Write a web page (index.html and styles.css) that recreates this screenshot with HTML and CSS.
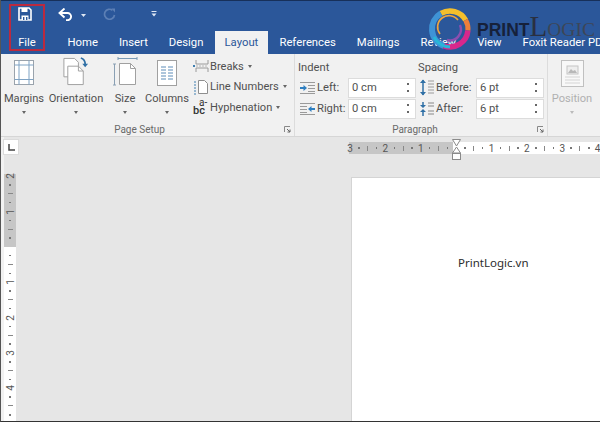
FILE: index.html
```html
<!DOCTYPE html>
<html lang="en">
<head>
<meta charset="utf-8">
<title>Word Layout</title>
<link rel="stylesheet" href="styles.css">
</head>
<body>
<div class="window">
  <header class="top">
    <div class="qat">
      <svg class="ic-save" width="14" height="14" viewBox="0 0 14 14"><path d="M1 1h10l2 2v10H1z" fill="none" stroke="#fff" stroke-width="1.6"/><path d="M3.5 1v4h6V1" fill="#fff"/><rect x="3.5" y="8.5" width="7" height="4.5" fill="#fff"/><rect x="5" y="10" width="1.4" height="3" fill="#2b579a"/><rect x="8" y="10" width="1.4" height="3" fill="#2b579a"/></svg>
      <svg class="ic-undo" width="15" height="13" viewBox="0 0 15 13"><path d="M2 5h7.5a3.6 3.6 0 0 1 0 7.2H8" fill="none" stroke="#fff" stroke-width="1.9"/><path d="M6.5 0.5L1.5 5l5 4.5" fill="none" stroke="#fff" stroke-width="1.9"/></svg>
      <svg class="ic-drop" width="5" height="3" viewBox="0 0 5 3"><path d="M0 0h5L2.5 3z" fill="#dfe7f3"/></svg>
      <svg class="ic-redo" width="13" height="13" viewBox="0 0 13 13"><path d="M9.5 2.2A5 5 0 1 0 11.5 7" fill="none" stroke="#5c7fb5" stroke-width="1.7"/><path d="M8.5 0.5h3.5v4z" fill="#5c7fb5"/></svg>
      <svg class="ic-custom" width="6" height="6" viewBox="0 0 6 6"><path d="M0.5 0.5h5" stroke="#dfe7f3"/><path d="M0.5 2.5h5L3 5.5z" fill="#dfe7f3"/></svg>
    </div>
    <nav class="tabs">
      <span class="tab tab-file">File</span>
      <span class="tab">Home</span>
      <span class="tab">Insert</span>
      <span class="tab">Design</span>
      <span class="tab tab-on">Layout</span>
      <span class="tab">References</span>
      <span class="tab">Mailings</span>
      <span class="tab">Review</span>
      <span class="tab">View</span>
      <span class="tab tab-last">Foxit Reader PDF</span>
    </nav>
    <div class="file-mark"></div>
    <div class="logo">
      <svg width="46" height="46" viewBox="0 0 46 46">
        <path d="M14 6.4A18 18 0 0 1 38.6 13" fill="none" stroke="#f4bf2c" stroke-width="5.5"/>
        <path d="M38.6 13A18 18 0 0 1 40.9 23.6" fill="none" stroke="#ee7f3a" stroke-width="5"/>
        <path d="M40.9 23.6A18 18 0 0 1 16.8 38.9" fill="none" stroke="#d8278c" stroke-width="5.5"/>
        <path d="M16.8 38.9A18 18 0 0 1 14 6.4" fill="none" stroke="#3f93d6" stroke-width="6"/>
        <path d="M13 27A11 11 0 0 1 31 13" fill="none" stroke="#f0a63c" stroke-width="1.6"/>
        <path d="M33 18A11 11 0 0 1 20 33" fill="none" stroke="#8b4fb0" stroke-width="2.4"/>
        <path d="M7 30A18 18 0 0 0 23 40" fill="none" stroke="#27b6d8" stroke-width="3"/>
      </svg>
      <span class="logo-print">PRINT</span><span class="logo-l">L</span><span class="logo-ogic">OGIC</span>
    </div>
  </header>

  <section class="ribbon">
    <div class="group group-setup">
      <div class="group-body">
        <div class="big b-margins">
          <svg width="22" height="27" viewBox="0 0 22 27"><rect x="1.5" y="1.5" width="19" height="24" fill="#fff" stroke="#9aa3ac"/><path d="M6 1.5v24M16 1.5v24" stroke="#7fa3c4"/><path d="M1.5 6h19M1.5 20.500h19" stroke="#7fa3c4"/></svg>
          <span class="big-label">Margins</span><i class="caret"></i>
        </div>
        <div class="big b-orient">
          <svg width="28" height="30" viewBox="0 0 28 30"><path d="M1.500 1.500h11l4 4v15h-15z" fill="#fff" stroke="#a0a0a0"/><path d="M5.500 9.500h11l5 5v14h-16z" fill="#fff" stroke="#a0a0a0"/><path d="M16.500 9.500v5h5" fill="none" stroke="#a0a0a0"/><path d="M19 1c3 1 4.500 3 4.500 6.500" fill="none" stroke="#2f6fa5" stroke-width="1.800"/><path d="M20.500 7h6l-3 3.500z" fill="#2f6fa5"/></svg>
          <span class="big-label">Orientation</span><i class="caret"></i>
        </div>
        <div class="big b-size">
          <svg width="25" height="29" viewBox="0 0 25 29"><path d="M5 1.500h19M5 0v3M24 0v3" stroke="#7a9ab5"/><path d="M1.500 7v21M0 7h3M0 28h3" stroke="#8aa0b4"/><path d="M6.500 6.500h11l5 5v16h-16z" fill="#fff" stroke="#a0a0a0"/><path d="M17.500 6.500v5h5" fill="none" stroke="#a0a0a0"/></svg>
          <span class="big-label">Size</span><i class="caret"></i>
        </div>
        <div class="big b-cols">
          <svg width="20" height="26" viewBox="0 0 20 26"><rect x="0.500" y="0.500" width="19" height="25" fill="#fff" stroke="#a0a0a0"/><path d="M4 7h5M11 7h5M4 10h5M11 10h5M4 13h5M11 13h5M4 16h5M11 16h5M4 19h5M11 19h5" stroke="#5d8cb8"/></svg>
          <span class="big-label">Columns</span><i class="caret"></i>
        </div>
        <div class="smalls">
          <div class="small">
            <svg width="16" height="14" viewBox="0 0 16 14"><path d="M3 1v4h12V1M3 13V9h12v4" fill="none" stroke="#9a9a9a"/><path d="M0 7h2" stroke="#3f7fb0" stroke-width="2"/><path d="M3 7h12" stroke="#b8b8b8" stroke-dasharray="2 1"/></svg>
            <span>Breaks</span><i class="caret"></i>
          </div>
          <div class="small">
            <svg width="16" height="16" viewBox="0 0 16 16"><path d="M5.500 1.500h6l3 3v10h-9z" fill="#fff" stroke="#8e8e8e"/><path d="M1 3h2M1 6h2M1 9h2M1 12h2M1 15h2" stroke="#3f7fb0"/></svg>
            <span>Line Numbers</span><i class="caret"></i>
          </div>
          <div class="small">
            <span class="hy"><b>bc</b><sup>a-</sup></span>
            <span>Hyphenation</span><i class="caret"></i>
          </div>
        </div>
      </div>
      <div class="group-foot foot-setup">Page Setup
        <svg class="launcher" width="7" height="7" viewBox="0 0 7 7"><path d="M0.500 6V0.500H6" fill="none" stroke="#888"/><path d="M3 3l3 3M6 3.500V6H3.500" fill="none" stroke="#666"/></svg>
      </div>
    </div>

    <div class="group group-para">
      <div class="group-body para-body">
        <div class="para-col col-indent">
          <div class="para-head">Indent</div>
          <div class="para-row">
            <svg class="ri" width="15" height="12" viewBox="0 0 15 12"><path d="M0 0.500h15M8 3.500h7M8 6.500h7M8 9.500h7M0 11.500h15" stroke="#9a9a9a"/><path d="M0 6h4" stroke="#2f7fc0" stroke-width="2"/><path d="M3.500 3l3.500 3-3.500 3z" fill="#2f7fc0"/></svg>
            <span class="lab">Left:</span>
            <div class="spin"><span>0 cm</span><i class="arrows"></i></div>
          </div>
          <div class="para-row">
            <svg class="ri" width="15" height="12" viewBox="0 0 15 12"><path d="M0 0.500h15M0 3.500h7M0 6.500h7M0 9.500h7M0 11.500h15" stroke="#9a9a9a"/><path d="M11 6h4" stroke="#2f7fc0" stroke-width="2"/><path d="M11.500 3L8 6l3.500 3z" fill="#2f7fc0"/></svg>
            <span class="lab">Right:</span>
            <div class="spin"><span>0 cm</span><i class="arrows"></i></div>
          </div>
        </div>
        <div class="para-col col-spacing">
          <div class="para-head">Spacing</div>
          <div class="para-row">
            <svg class="ri ri-w" width="14" height="17" viewBox="0 0 14 17"><path d="M3 1v15" stroke="#2f6fa5" stroke-width="1.500"/><path d="M0 4l3-3.500L6 4zM0 13l3 3.500L6 13z" fill="#2f6fa5"/><path d="M8 2h6M8 5h6M8 8h6M8 11h6M8 14h6" stroke="#9a9a9a"/></svg>
            <span class="lab lab-w">Before:</span>
            <div class="spin"><span>6 pt</span><i class="arrows"></i></div>
          </div>
          <div class="para-row">
            <svg class="ri ri-w" width="14" height="15" viewBox="0 0 14 15"><path d="M3 1v4M3 10v5" stroke="#2f6fa5" stroke-width="1.500"/><path d="M0 4l3 3 3-3zM0 11l3-3 3 3z" fill="#2f6fa5"/><path d="M8 2h6M8 5h6M8 10h6M8 13h6" stroke="#aaa" stroke-width="1.500"/></svg>
            <span class="lab lab-w">After:</span>
            <div class="spin"><span>6 pt</span><i class="arrows"></i></div>
          </div>
        </div>
      </div>
      <div class="group-foot foot-para">Paragraph
        <svg class="launcher" width="7" height="7" viewBox="0 0 7 7"><path d="M0.500 6V0.500H6" fill="none" stroke="#888"/><path d="M3 3l3 3M6 3.500V6H3.500" fill="none" stroke="#666"/></svg>
      </div>
    </div>

    <div class="group group-pos">
      <div class="big big-off">
        <svg width="23" height="27" viewBox="0 0 23 27"><rect x="0.500" y="0.500" width="22" height="26" fill="#f8f8f8" stroke="#c0c0c0"/><rect x="6" y="6" width="11" height="8" fill="#eee" stroke="#c4c4c4"/><path d="M7 13l3-4 2 2 2-1 2 3z" fill="#b8b8b8"/><path d="M4 17h15M4 20h15M4 23h15" stroke="#d4d4d4"/></svg>
        <span class="big-label">Position</span><i class="caret"></i>
      </div>
    </div>
  </section>

  <section class="workspace">
    <aside class="vside">
      <div class="corner"><svg width="7" height="7" viewBox="0 0 7 7"><path d="M1 0v6h6" fill="none" stroke="#444" stroke-width="1.500"/></svg></div>
      <div class="vruler">
        <i class="c n first"><b>2</b></i><i class="c d"></i><i class="c l"></i><i class="c d"></i>
        <i class="c n"><b>1</b></i><i class="c d"></i><i class="c l"></i><i class="c d"></i>
        <i class="c n"></i><i class="c d"></i><i class="c l"></i><i class="c d"></i>
        <i class="c n"><b>1</b></i><i class="c d"></i><i class="c l"></i><i class="c d"></i>
        <i class="c n"><b>2</b></i><i class="c d"></i><i class="c l"></i><i class="c d"></i>
        <i class="c n"><b>3</b></i><i class="c d"></i><i class="c l"></i><i class="c d"></i>
        <i class="c n"><b>4</b></i><i class="c d"></i><i class="c l"></i><i class="c d"></i>
      </div>
    </aside>
    <main class="docarea">
      <div class="hruler">
        <i class="c n first"><b>3</b></i><i class="c d"></i><i class="c l"></i><i class="c d"></i>
        <i class="c n"><b>2</b></i><i class="c d"></i><i class="c l"></i><i class="c d"></i>
        <i class="c n"><b>1</b></i><i class="c d"></i><i class="c l"></i><i class="c d"></i>
        <i class="c n"></i><i class="c d"></i><i class="c l"></i><i class="c d"></i>
        <i class="c n"><b>1</b></i><i class="c d"></i><i class="c l"></i><i class="c d"></i>
        <i class="c n"><b>2</b></i><i class="c d"></i><i class="c l"></i><i class="c d"></i>
        <i class="c n"><b>3</b></i><i class="c d"></i><i class="c l"></i><i class="c d"></i>
        <i class="c n"><b>4</b></i>
      </div>
      <svg class="indent-mark" width="10" height="21" viewBox="0 0 10 21"><path d="M0.500 0.500h8L4.500 7z" fill="#fff" stroke="#8a8a8a"/><path d="M4.500 8l4 6h-8z" fill="#fff" stroke="#8a8a8a"/><rect x="0.500" y="14.500" width="8" height="6" fill="#fff" stroke="#8a8a8a"/></svg>
      <article class="page"><p class="page-text">PrintLogic.vn</p></article>
    </main>
  </section>
</div>
</body>
</html>
```
FILE: styles.css
```css
* { box-sizing: border-box; }
html, body { margin: 0; padding: 0; }
body { width: 600px; height: 422px; overflow: hidden; font-family: Roboto, "Noto Sans", sans-serif; color: #505050; background: #e6e6e6; }
.window { position: relative; width: 600px; height: 422px; display: flex; flex-direction: column; border-left: 1px solid #555; border-bottom: 1px solid #333; overflow: hidden; }

.top { position: relative; height: 54px; flex: none; background: #2b579a; border-top: 1px solid #17305a; margin-left: -1px; }
.qat { height: 30px; position: relative; display: flex; align-items: flex-start; }
.ic-save { margin: 6px 0 0 18px; }
.ic-undo { margin: 7px 0 0 26px; }
.ic-drop { margin: 13px 0 0 8px; }
.ic-redo { margin: 7px 0 0 17px; }
.ic-custom { margin: 10px 0 0 35px; }

.tabs { display: flex; height: 23px; white-space: nowrap; }
.tab { padding: 3px 10.500px 0; font-size: 11.300px; line-height: 18px; color: #fff; flex: none; }
.tab-file { width: 57px; padding: 3px 3px 0 0; text-align: center; }
.tab-on { width: 53px; padding: 3px 0 0; text-align: center; background: #f1f1f1; color: #2b579a; margin: 0 1px; }
.tab-last { padding-right: 0; }
.file-mark { position: absolute; left: 9px; top: 3px; width: 36px; height: 47px; border: 2px solid #bb2a3f; }

.logo { position: absolute; left: 427px; top: 6px; width: 173px; height: 46px; display: flex; align-items: baseline; }
.logo svg { position: absolute; left: 0; top: 0; }
.logo-print { margin: 13px 0 0 50px; font: bold 17.500px/20px "Liberation Sans", sans-serif; color: #16213a; }
.logo-l { font: 29px/20px "Liberation Serif", serif; color: #2a3040; }
.logo-ogic { font: 19.500px/20px "Liberation Serif", serif; color: #3d4657; }

.ribbon { height: 83px; flex: none; display: flex; background: #f1f1f1; border-bottom: 1px solid #d6d6d6; }
.group { display: flex; flex-direction: column; border-right: 1px solid #dcdcdc; }
.group-setup { width: 294px; }
.group-para { width: 253px; }
.group-pos { flex: 1; border-right: 0; padding: 6px 0 0 4px; }
.group-body { flex: 1; display: flex; }
.group-foot { position: relative; height: 15px; padding-top: 2px; font-size: 10px; line-height: 13px; text-align: center; color: #6a6a6a; }
.foot-setup { padding-right: 16px; }
.foot-para { padding-right: 12px; }
.launcher { position: absolute; right: 3px; top: 5px; }

.big { display: flex; flex-direction: column; align-items: center; font-size: 11.100px; }
.big svg { height: 27px; }
.big-label { margin-top: 5px; line-height: 16px; white-space: nowrap; }
.caret { display: block; width: 0; height: 0; border: 2.500px solid transparent; border-top: 3px solid #666; border-bottom: 0; }
.big .caret { margin-top: 4px; }
.b-margins { width: 40px; margin: 5px 0 0 3px; }
.b-orient { width: 58px; margin: 3px 0 0 3px; }
.b-orient svg { height: 29px; }
.b-size { width: 24px; margin: 3px 0 0 8px; }
.b-size svg { height: 29px; }
.b-cols { width: 44px; margin: 6px 0 0 8px; }
.b-cols svg { height: 26px; }
.smalls { margin: 2px 0 0 4px; display: flex; flex-direction: column; }
.small { display: flex; align-items: center; height: 20.500px; gap: 1px; font-size: 11.100px; white-space: nowrap; }
.small svg { flex: none; width: 16px; }
.small .caret { margin-left: 3px; }
.hy { position: relative; width: 16px; height: 16px; flex: none; font-size: 10px; line-height: 10px; color: #333; }
.hy b { position: absolute; left: 0; top: 7px; font-weight: 500; font-size: 11px; }
.hy sup { position: absolute; left: 6px; top: -1px; font-size: 10px; line-height: 10px; vertical-align: baseline; }

.para-body { padding: 4px 0 0 3px; }
.para-col { display: flex; flex-direction: column; }
.col-indent { width: 120px; }
.para-head { font-size: 11.200px; padding-top: 1px; line-height: 17px; height: 19px; }
.para-row { display: flex; align-items: center; height: 21px; }
.ri { margin-left: 2px; flex: none; }
.lab { width: 31px; margin-left: 2px; font-size: 11.200px; flex: none; white-space: nowrap; }
.ri-w { margin-left: 2px; }
.lab-w { width: 40px; }
.spin { width: 68px; height: 20px; flex: none; display: flex; align-items: center; justify-content: space-between; background: #fff; border: 1px solid #dcdcdc; padding: 0 5px 0 3px; font-size: 11.200px; }
.arrows { width: 5px; height: 13px; display: block; background: linear-gradient(#666, #666) 1.500px 2px / 2px 2px no-repeat, linear-gradient(#666, #666) 1.500px 9px / 2px 2px no-repeat; }

.big-off { width: 40px; color: #b0b0b0; }
.big-off .big-label { margin-top: 4px; }
.big-off .caret { border-top-color: #bbb; }

.workspace { flex: 1; min-height: 0; display: flex; }
.vside { width: 19px; flex: none; display: flex; flex-direction: column; background: linear-gradient(90deg, #f2f2f2 0, #f2f2f2 3px, #e6e6e6 3px); }
.corner { width: 16px; height: 16px; margin: 2px 0 0 2px; display: flex; align-items: center; justify-content: center; background: #fff; border: 1px solid #dcdcdc; flex: none; }
.vruler { width: 12px; margin: 19px 0 0 3px; display: flex; flex-direction: column; background: linear-gradient(#c6c6c6 0, #c6c6c6 73px, #fff 73px); height: 250px; flex: none; }
.docarea { flex: 1; position: relative; display: flex; flex-direction: column; background: #e6e6e6; min-width: 0; }
.hruler { margin: 5px 0 0 329px; height: 12px; display: flex; background: linear-gradient(90deg, #c6c6c6 0, #c6c6c6 104px, #fff 104px); flex: none; }
.c { display: flex; align-items: center; justify-content: center; flex: none; font-style: normal; }
.hruler .c { width: 8.850px; height: 12px; }
.vruler .c { height: 8.850px; width: 12px; }
.hruler .first { margin-left: -3.400px; }
.vruler .first { margin-top: -2.400px; }
.n b { font-weight: 400; font-size: 10px; line-height: 9px; color: #555; }
.vruler .n b { writing-mode: vertical-rl; transform: rotate(180deg); }
.d::before { content: ""; width: 1.500px; height: 1.500px; background: #777; }
.hruler .l::before { content: ""; width: 1px; height: 5px; background: #888; }
.vruler .l::before { content: ""; width: 5px; height: 1px; background: #888; }
.indent-mark { position: absolute; left: 431.500px; top: 2px; }
.page { margin: 23px 0 0 331px; flex: 1; background: #fff; border: 1px solid #d4d4d4; border-bottom: 0; border-right: 0; }
.page-text { margin: 77px 0 0 106px; font: 11.500px/16px "Noto Sans", sans-serif; color: #2c2c2c; }
```
